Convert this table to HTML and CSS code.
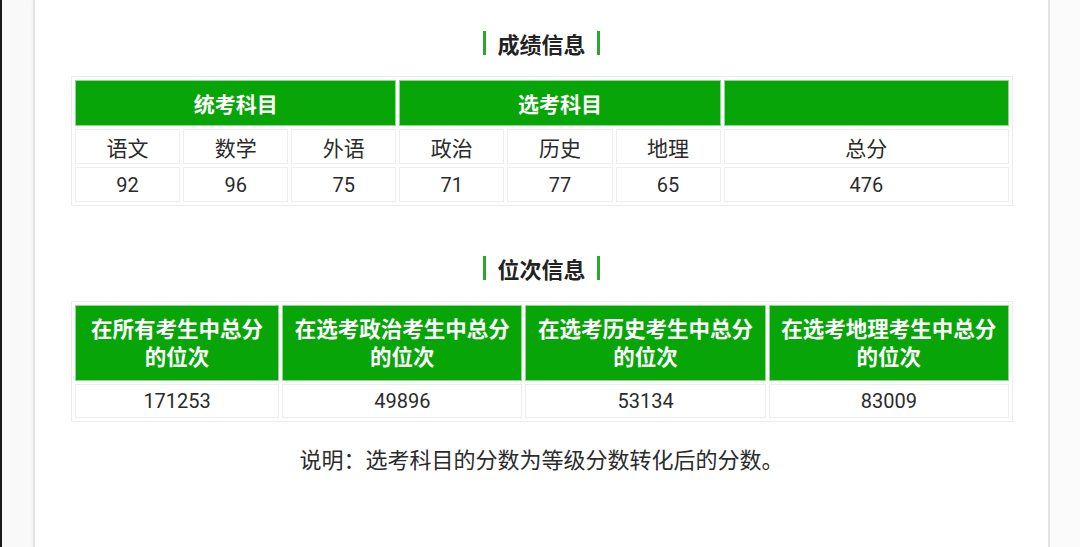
FILE: index.html
```html
<!DOCTYPE html>
<html lang="zh">
<head>
<meta charset="utf-8">
<link rel="stylesheet" href="styles.css">
</head>
<body>
<div class="page">
  <div class="edge"></div>
  <div class="card">
    <div class="title"><span class="bar"></span><span class="title-text">成绩信息</span><span class="bar"></span></div>
    <table class="grid scores">
      <colgroup>
        <col class="c-s"><col class="c-s"><col class="c-s"><col class="c-s"><col class="c-s"><col class="c-s"><col class="c-l">
      </colgroup>
      <tr class="head"><th colspan="3">统考科目</th><th colspan="3">选考科目</th><th></th></tr>
      <tr class="row"><td>语文</td><td>数学</td><td>外语</td><td>政治</td><td>历史</td><td>地理</td><td>总分</td></tr>
      <tr class="row num"><td>92</td><td>96</td><td>75</td><td>71</td><td>77</td><td>65</td><td>476</td></tr>
    </table>

    <div class="title second"><span class="bar"></span><span class="title-text">位次信息</span><span class="bar"></span></div>
    <table class="grid ranks">
      <colgroup>
        <col class="r-1"><col class="r-2"><col class="r-2"><col class="r-2">
      </colgroup>
      <tr class="head tall"><th>在所有考生中总分<br>的位次</th><th>在选考政治考生中总分<br>的位次</th><th>在选考历史考生中总分<br>的位次</th><th>在选考地理考生中总分<br>的位次</th></tr>
      <tr class="row num"><td>171253</td><td>49896</td><td>53134</td><td>83009</td></tr>
    </table>

    <p class="note">说明：选考科目的分数为等级分数转化后的分数。</p>
  </div>
  <div class="right"></div>
</div>
</body>
</html>
```

FILE: styles.css
```css
html, body {
  margin: 0;
  padding: 0;
  background: #fafafa;
}
body {
  font-family: Roboto, "Noto Sans CJK SC", sans-serif;
  color: #2b2b2b;
}
.page {
  display: flex;
  height: 547px;
  overflow: hidden;
}
.edge {
  width: 33px;
  flex: none;
  border-left: 2px solid #1a1a1a;
  box-sizing: border-box;
  background: #f9f9f9;
}
.card {
  width: 1017px;
  flex: none;
  background: #fff;
  border-left: 2px solid #e2e2e2;
  border-right: 2px solid #e4e4e4;
  box-sizing: border-box;
  padding: 30px 36px 0 36px;
  box-shadow: 0 0 4px rgba(0,0,0,0.06);
}
.right {
  flex: 1;
  background: #fbfbfb;
}
.title {
  display: flex;
  justify-content: center;
  align-items: center;
  gap: 11px;
  height: 26px;
  margin-bottom: 20px;
}
.title.second {
  margin-top: 49px;
}
.bar {
  width: 3px;
  height: 24px;
  background: #2ea52e;
}
.title-text {
  font-size: 22px;
  font-weight: bold;
  color: #222;
  font-family: "Noto Sans CJK SC", sans-serif;
}
.grid {
  width: 942px;
  table-layout: fixed;
  border-collapse: separate;
  border-spacing: 3px;
  border: 1px solid #ececec;
}
.c-s { width: 105px; }
.c-l { width: 285px; }
.r-1 { width: 204px; }
.r-2 { width: 240px; }
.grid th {
  background: #08a508;
  color: #fff;
  font-weight: bold;
  font-size: 21px;
  height: 46px;
  padding: 0;
  border: 1px solid #8fd88f;
  box-sizing: border-box;
  font-family: "Noto Sans CJK SC", sans-serif;
}
.head.tall th {
  height: 76px;
  font-size: 21.5px;
  line-height: 28px;
  padding-bottom: 2px;
}
.grid td {
  border: 1px solid #eeeeee;
  text-align: center;
  font-size: 21px;
  height: 35px;
  padding: 0;
  box-sizing: border-box;
  color: #2b2b2b;
}
.row.num td {
  font-size: 20px;
}
.ranks .row td {
  height: 34px;
}
.note {
  margin: 22px 0 0 0;
  text-align: center;
  font-size: 22px;
  line-height: 28px;
  color: #2b2b2b;
  font-family: "Noto Sans CJK SC", sans-serif;
}
```
